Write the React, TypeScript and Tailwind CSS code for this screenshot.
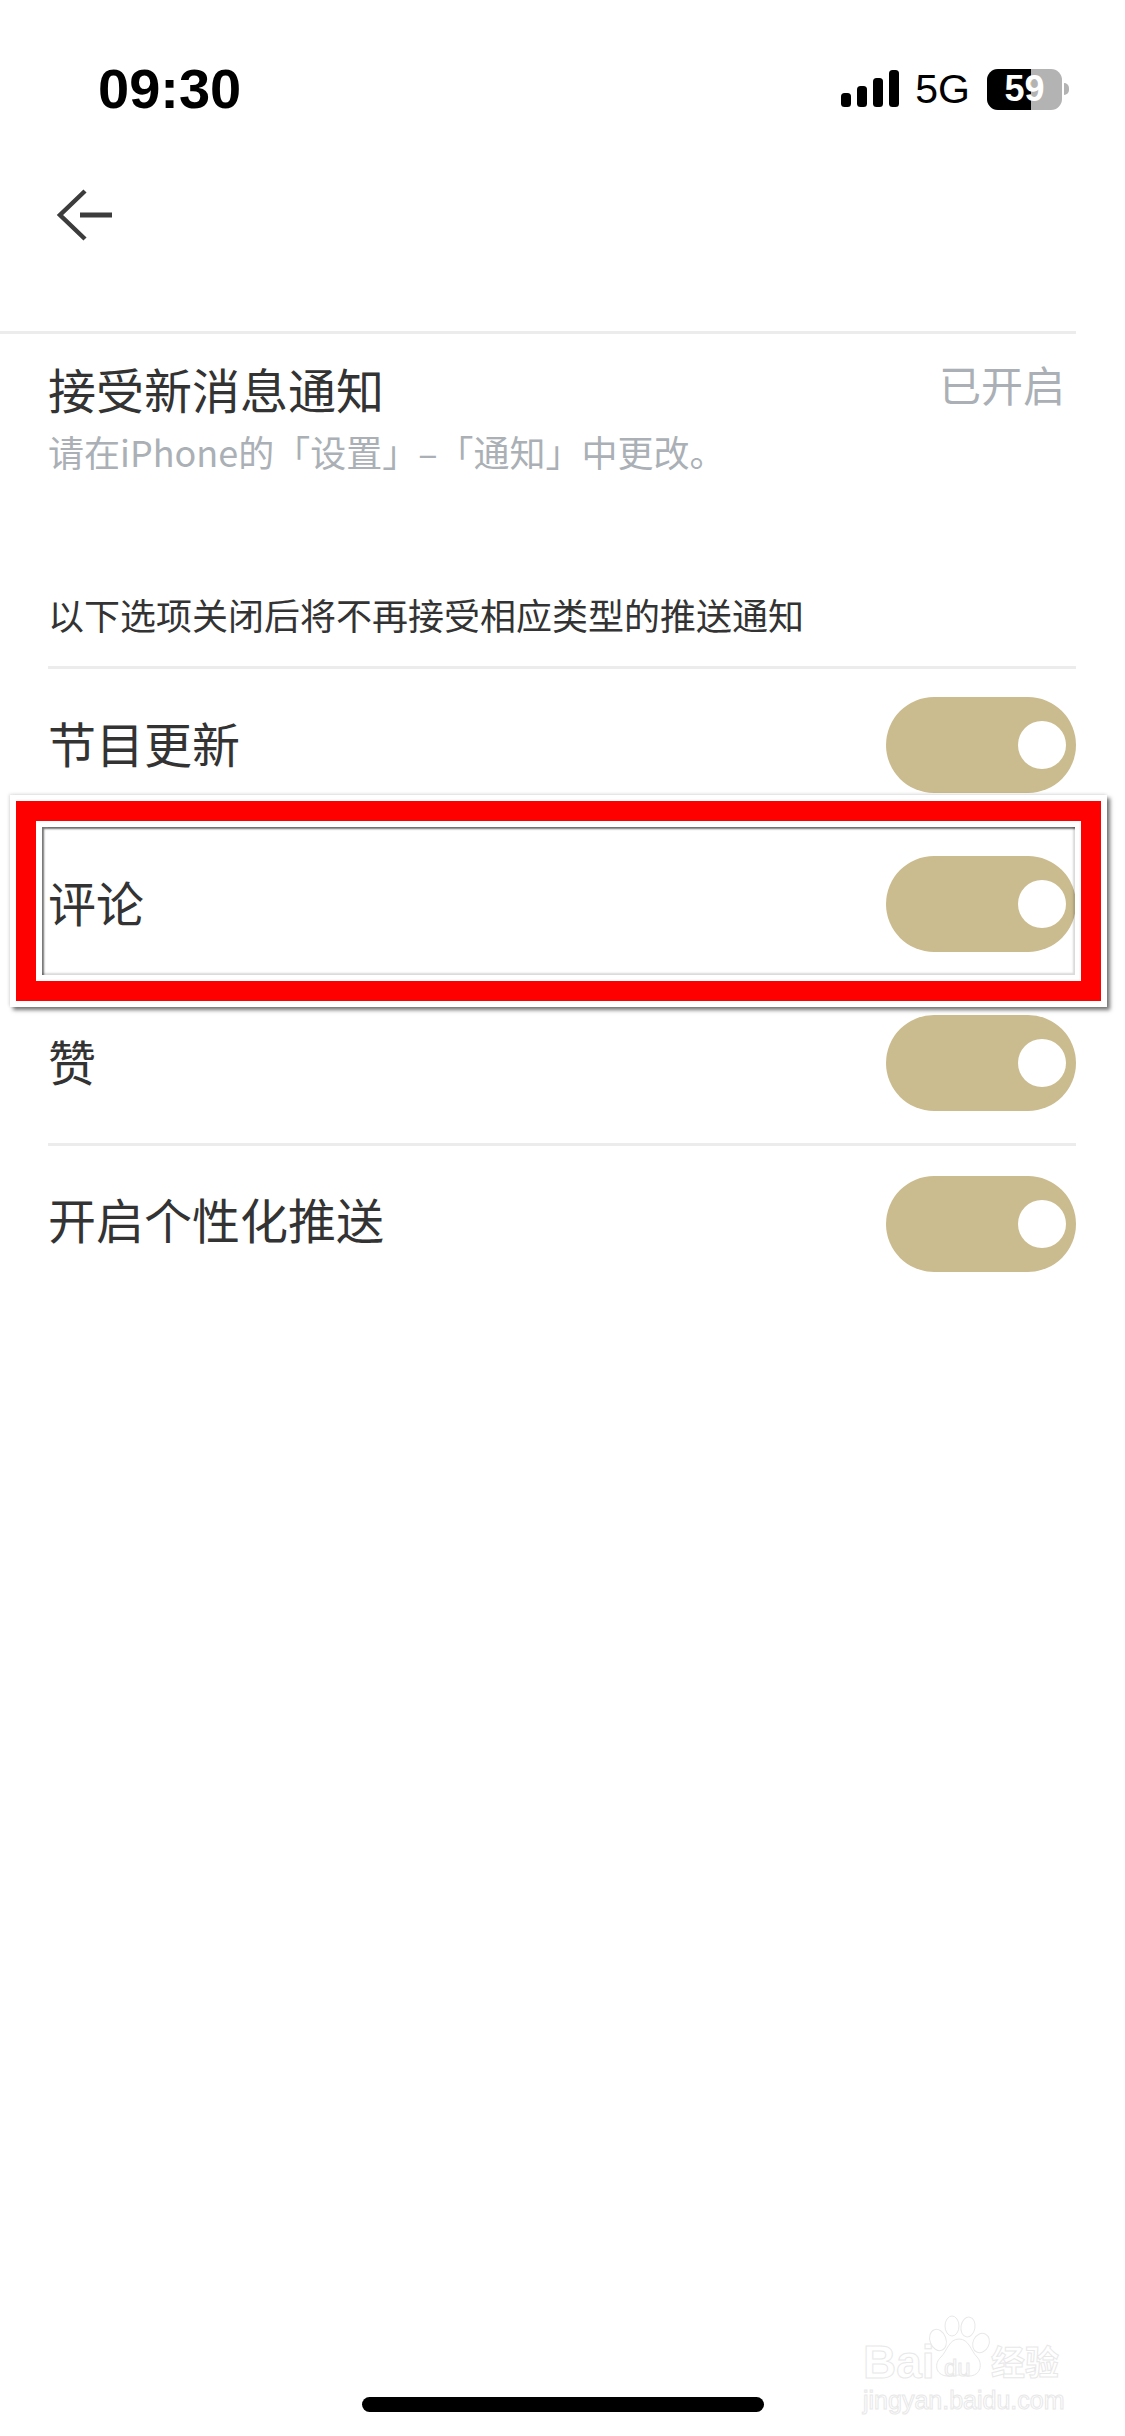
const cjk = "font-['PingFang_SC','Noto_Sans_CJK_SC','Noto_Sans',sans-serif]";

function Toggle() {
  return (
    <div className="flex h-[96px] w-[190px] shrink-0 items-center justify-end rounded-full bg-[#cbbc8f] pr-[10px]">
      <div className="h-[48px] w-[48px] rounded-full bg-white" />
    </div>
  );
}

function Row({ label }: { label: string }) {
  return (
    <div className="flex h-[159px] items-center justify-between border-b-[3px] border-[#ececec] pb-[4px]">
      <span className="mb-[6px] text-[48px] leading-none font-normal text-[#333333]">{label}</span>
      <Toggle />
    </div>
  );
}

function StatusBar() {
  return (
    <div className="flex h-[120px] items-center justify-between pt-[58px] pl-[98px] pr-[56px] font-['Liberation_Sans',sans-serif] text-black">
      <span className="text-[56px] leading-none font-bold">09:30</span>
      <div className="flex items-center">
        <svg width="58" height="38" viewBox="0 0 58 38" fill="#000">
          <rect x="0" y="23" width="10" height="14" rx="3.5" />
          <rect x="16" y="16" width="10" height="21" rx="3.5" />
          <rect x="32" y="8" width="10" height="29" rx="3.5" />
          <rect x="48" y="0" width="10" height="37" rx="3.5" />
        </svg>
        <span className="ml-[16px] text-[41px] leading-none">5G</span>
        <div className="relative ml-[17px] flex h-[41px] w-[75px] items-center justify-center overflow-hidden rounded-[11px] bg-[#b3b3b3]">
          <div className="absolute inset-y-0 left-0 w-[44px] bg-black" />
          <span className="relative text-[36px] leading-none font-bold text-white">59</span>
        </div>
        <div className="ml-[2px] h-[12px] w-[5px] rounded-r-full bg-[#b3b3b3]" />
      </div>
    </div>
  );
}

function BackArrow() {
  return (
    <svg width="56" height="52" viewBox="0 0 56 52" fill="none" stroke="#3c3c3c">
      <path d="M29 2 L4 26 L29 50" strokeWidth="4.5" />
      <path d="M24 26 H57" strokeWidth="5" />
    </svg>
  );
}

function Watermark() {
  return (
    <div className="pointer-events-none absolute left-[863px] top-[2315px] w-[200px] font-['Liberation_Sans',sans-serif] text-white [-webkit-text-stroke:1px_#e8e8e8]">
      <div className="relative h-[70px]">
        <span className="absolute left-0 top-[24px] text-[46px] leading-none font-bold">Bai</span>
        <svg className="absolute left-[64px] top-0" width="64" height="70" viewBox="0 0 64 70" fill="#fff" stroke="#e8e8e8" strokeWidth="1">
          <ellipse cx="11" cy="25" rx="8" ry="11" transform="rotate(-20 11 25)" />
          <ellipse cx="25" cy="11" rx="7" ry="10" />
          <ellipse cx="41" cy="12" rx="7" ry="10" transform="rotate(10 41 12)" />
          <ellipse cx="54" cy="28" rx="8" ry="10" transform="rotate(25 54 28)" />
          <path d="M32 24 C42 24 44 36 50 42 C56 48 54 61 42 61 C36 61 36 60 32 60 C28 60 26 62 20 61 C8 60 7 48 14 42 C20 36 22 24 32 24 Z" />
        </svg>
        <span className="absolute left-[81px] top-[41px] text-[24px] leading-none">du</span>
        <span className="absolute left-[128px] top-[29px] font-['Noto_Sans_CJK_SC',sans-serif] text-[34px] leading-none font-bold">经验</span>
      </div>
      <div className="mt-[3px] text-[25px] leading-none whitespace-nowrap">jingyan.baidu.com</div>
    </div>
  );
}

export default function App() {
  return (
    <div className={`relative h-[2436px] w-[1125px] overflow-hidden bg-white ${cjk}`}>
      <StatusBar />
      <div className="pt-[69px] pl-[56px]">
        <BackArrow />
      </div>
      <div className="mt-[90px] mr-[49px] border-b-[3px] border-[#ececec]" />

      <div className="ml-[48px] mr-[49px]">
        <div className="flex items-start justify-between pt-[26px]">
          <div>
            <div className="text-[48px] leading-[56px] font-normal text-[#333333]">接受新消息通知</div>
            <div className="mt-[14px] text-[36px] leading-[42px] font-normal text-[#aab0b5]">请在iPhone的「设置」–「通知」中更改。</div>
          </div>
          <div className="pr-[11px] text-[42px] leading-[48px] font-normal text-[#aab0b5]">已开启</div>
        </div>
        <div className="mt-[117px] flex h-[49px] items-center text-[36px] leading-none font-normal text-[#333333]">以下选项关闭后将不再接受相应类型的推送通知</div>
        <div className="mt-[28px] border-b-[3px] border-[#ececec]" />
        <Row label="节目更新" />
        <Row label="评论" />
        <Row label="赞" />
        <div className="flex h-[156px] items-center justify-between">
          <span className="mb-[12px] text-[48px] leading-none font-normal text-[#333333]">开启个性化推送</span>
          <Toggle />
        </div>
      </div>

      {/* Red annotation frame drawn over the second row */}
      <div className="pointer-events-none absolute left-[10px] top-[795px] h-[212px] w-[1097px] border-[6px] border-white shadow-[3px_3px_4px_rgba(0,0,0,0.55),-1px_-1px_3px_rgba(0,0,0,0.12)]">
        <div className="h-full w-full border-[20px] border-[#ff0000]">
          <div className="h-full w-full border-[6px] border-white">
            <div className="h-full w-full shadow-[inset_2px_2px_2px_rgba(0,0,0,0.55),inset_-2px_-2px_2px_rgba(0,0,0,0.15)]" />
          </div>
        </div>
      </div>

      <div className="absolute left-[362px] top-[2397px] h-[15px] w-[402px] rounded-full bg-black" />
      <Watermark />
    </div>
  );
}
